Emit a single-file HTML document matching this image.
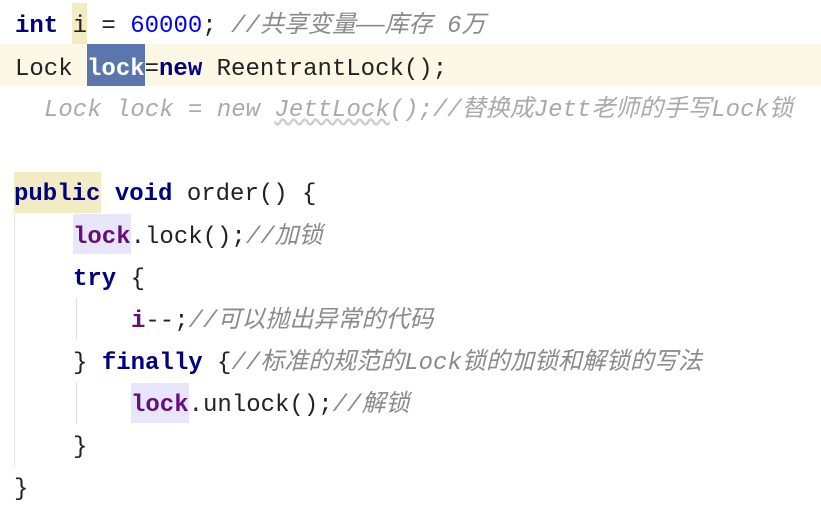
<!DOCTYPE html>
<html><head><meta charset="utf-8"><style>
body{margin:0;width:821px;height:489px;background:#fff;overflow:hidden;position:relative;font-family:"Liberation Mono","Noto Sans CJK SC",monospace;font-size:24px;color:#222;}
.l{position:absolute;left:0;height:42px;line-height:42px;white-space:pre;}
.k{color:#000080;font-weight:bold}
.n{color:#0000ff}
.c{color:#8a8a8a;font-style:italic}
.g{color:#aaa;font-style:italic}
.b{position:absolute}
.bar{position:absolute;width:1px;background:#e0e0e0}
</style></head><body>
<div class="b" style="left:0;top:44px;width:821px;height:42px;background:#fdf8e6"></div>
<div class="b" style="left:72px;top:3px;width:15px;height:41px;background:#f3ebc4"></div>
<div class="b" style="left:87px;top:44px;width:58px;height:42px;background:#5a76ad"></div>
<div class="b" style="left:14px;top:172px;width:87px;height:41px;background:#f3ebc4"></div>
<div class="b" style="left:73px;top:214px;width:58px;height:40px;background:#e8e6fb"></div>
<div class="b" style="left:131px;top:383px;width:58px;height:40px;background:#e8e6fb"></div>
<div class="bar" style="left:14px;top:214px;height:252px"></div>
<div class="bar" style="left:76px;top:298px;height:42px"></div>
<div class="bar" style="left:76px;top:382px;height:42px"></div>
<div class="l" style="top:6px;left:15px"><span class="k">int</span> i = <span class="n">60000</span>; <span class="c">//共享变量——库存 6万</span></div>
<div class="l" style="top:49px;left:15px">Lock <span style="color:#fff;font-weight:bold">lock</span>=<span class="k">new</span> ReentrantLock();</div>
<div class="l g" style="top:90px;left:44px">Lock lock = new <span style="text-decoration:underline wavy #ccc">JettLock</span>();//替换成Jett老师的手写Lock锁</div>
<div class="l" style="top:174px;left:14px"><span class="k">public</span> <span class="k">void</span> order() {</div>
<div class="l" style="top:217px;left:73px"><span class="k" style="color:#660e7a">lock</span>.lock();<span class="c">//加锁</span></div>
<div class="l" style="top:259px;left:73px"><span class="k">try</span> {</div>
<div class="l" style="top:301px;left:131px"><span class="k" style="color:#660e7a">i</span>--;<span class="c">//可以抛出异常的代码</span></div>
<div class="l" style="top:343px;left:73px">} <span class="k">finally</span> {<span class="c">//标准的规范的Lock锁的加锁和解锁的写法</span></div>
<div class="l" style="top:385px;left:131px"><span class="k" style="color:#660e7a">lock</span>.unlock();<span class="c">//解锁</span></div>
<div class="l" style="top:427px;left:73px">}</div>
<div class="l" style="top:469px;left:14px">}</div>
</body></html>
